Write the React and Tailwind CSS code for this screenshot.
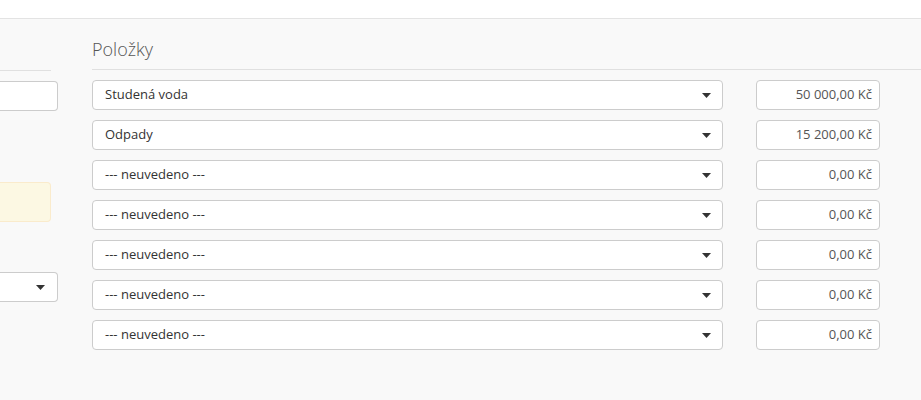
const rows = [
  { label: "Studená voda", amount: "50 000,00 Kč" },
  { label: "Odpady", amount: "15 200,00 Kč" },
  { label: "--- neuvedeno ---", amount: "0,00 Kč" },
  { label: "--- neuvedeno ---", amount: "0,00 Kč" },
  { label: "--- neuvedeno ---", amount: "0,00 Kč" },
  { label: "--- neuvedeno ---", amount: "0,00 Kč" },
  { label: "--- neuvedeno ---", amount: "0,00 Kč" },
];

function Caret() {
  return (
    <svg width="9" height="5" viewBox="0 0 9 5" className="shrink-0">
      <path d="M0 0h9L4.5 5z" fill="#333" />
    </svg>
  );
}

function Select({ label, className }) {
  return (
    <div
      className={`h-[30px] flex items-center justify-between pl-[12px] pr-[11px] bg-white border border-[#ccc] rounded-[4px] text-[13px] text-[#333] ${className}`}
    >
      <span>{label}</span>
      <Caret />
    </div>
  );
}

export default function App() {
  return (
    <div className="w-[921px] h-[400px] overflow-hidden bg-[#f9f9f9] font-['Open_Sans',sans-serif]">
      {/* top bar */}
      <div className="h-[19px] bg-white border-b border-[#e3e3e3]" />

      <div className="flex">
        {/* left column, mostly cut off */}
        <div className="w-[58px] shrink-0 pt-[51px]">
          <div className="w-[51px] border-b border-[#e0e0e0]" />
          <div className="mt-[10px] h-[30px] bg-white border border-[#ccc] border-l-0 rounded-r-[4px]" />
          <div className="mt-[71px] w-[51px] h-[40px] bg-[#fcf8e3] border border-[#faebcc] border-l-0 rounded-r-[4px]" />
          <div className="mt-[50px] h-[30px] flex items-center justify-end pr-[12px] bg-white border border-[#ccc] border-l-0 rounded-r-[4px]">
            <Caret />
          </div>
        </div>

        {/* right column */}
        <div className="ml-[34px] flex-1">
          <h3 className="h-[51px] pt-[18px] text-[18px] leading-[24px] font-light text-[#555] border-b border-[#e0e0e0]">
            Položky
          </h3>
          <div className="pt-[10px] flex flex-col gap-[10px]">
            {rows.map((r, i) => (
              <div key={i} className="flex items-center">
                <Select label={r.label} className="w-[631px]" />
                <div className="ml-[33px] w-[124px] h-[30px] flex items-center justify-end pr-[7px] bg-white border border-[#ccc] rounded-[4px] text-[13px] text-[#555]">
                  {r.amount}
                </div>
              </div>
            ))}
          </div>
        </div>
      </div>
    </div>
  );
}
